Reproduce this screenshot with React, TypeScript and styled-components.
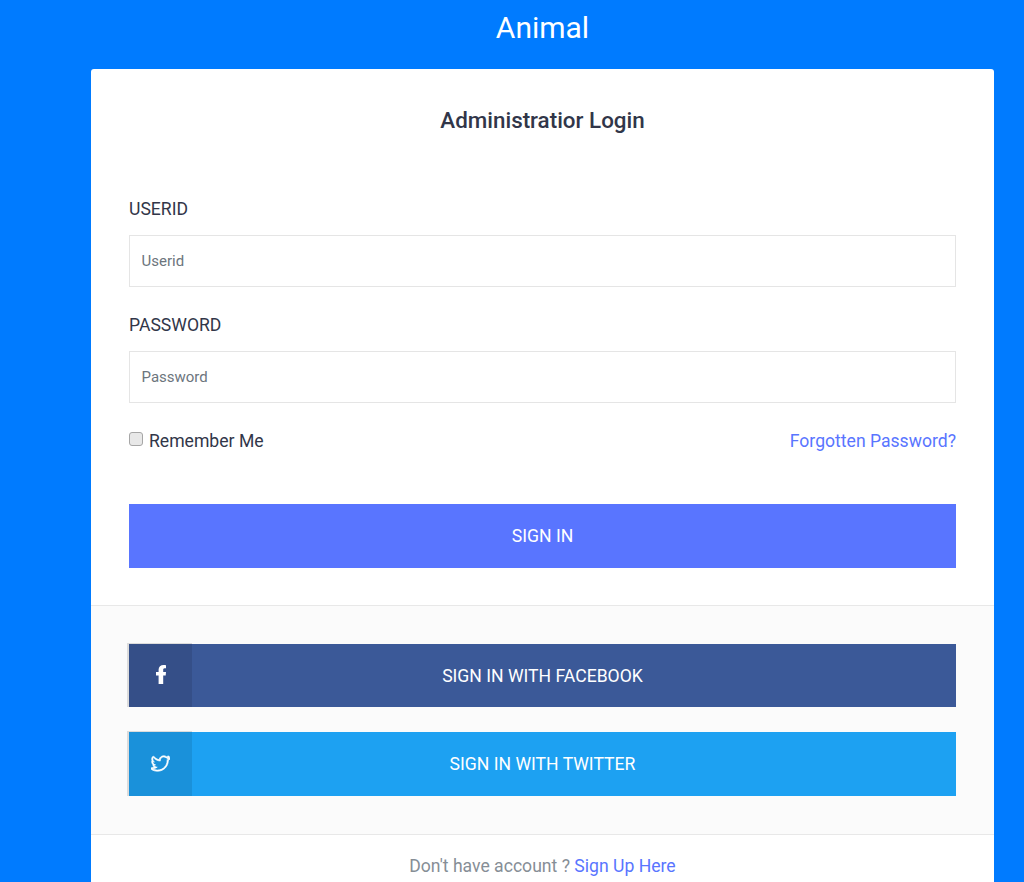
import React from "react";
import styled, { createGlobalStyle } from "styled-components";
import { SlSocialTwitter } from "react-icons/sl";

const Global = createGlobalStyle`
  html, body { margin: 0; padding: 0; height: 100%; overflow: hidden; background: #007bff; }
  * { box-sizing: border-box; }
  body { font-family: Roboto, "Liberation Sans", sans-serif; }
`;

const Page = styled.div`
  height: 882px;
  overflow: hidden;
  background: #007bff;
`;
const Brand = styled.h1`
  margin: 0;
  height: 69px;
  padding-top: 10px;
  padding-left: 61px;
  text-align: center;
  color: #fff;
  font-size: 30px;
  line-height: 36px;
  font-weight: 400;
`;
const Card = styled.div`
  margin: 0 30px 0 91px;
  background: #fff;
  border-radius: 3px;
`;
const Section = styled.div`
  padding: 38px 38px 37px;
`;
const Title = styled.h2`
  margin: 0 0 64px;
  text-align: center;
  color: #313649;
  font-size: 22.4px;
  line-height: 26px;
  font-weight: 500;
`;
const Field = styled.div`
  margin-bottom: 26px;
`;
const Label = styled.label`
  display: block;
  margin-bottom: 14px;
  color: #313649;
  font-size: 17.6px;
  line-height: 24px;
`;
const Input = styled.input`
  display: block;
  width: 100%;
  height: 52px;
  padding: 0 11.5px;
  border: 1px solid #e5e5e5;
  border-radius: 0;
  background: #fff;
  font-family: inherit;
  font-size: 15px;
  outline: none;
  &::placeholder { color: #6c757d; opacity: 1; }
`;
const OptionsRow = styled.div`
  display: flex;
  justify-content: space-between;
  align-items: center;
  height: 24px;
  margin-top: 1px;
  margin-bottom: 51px;
`;
const Remember = styled.label`
  display: flex;
  align-items: center;
  color: #313649;
  font-size: 17.6px;
  line-height: 24px;
`;
const Check = styled.input`
  appearance: none;
  width: 14px;
  height: 14px;
  margin: 0 6px 5px 0;
  border: 1px solid #a6a6a6;
  border-radius: 3px;
  background: #e8e8e8;
`;
const Link = styled.a`
  color: #5975ff;
  font-size: 17.6px;
  line-height: 24px;
  text-decoration: none;
`;
const SignIn = styled.button`
  display: block;
  width: 100%;
  height: 64px;
  border: 0;
  background: #5975ff;
  color: #fff;
  font-family: inherit;
  font-size: 17.6px;
  text-transform: uppercase;
`;
const SocialSection = styled.div`
  padding: 38px 38px;
  background: #fbfbfb;
  border-top: 1px solid #e8e8e8;
  border-bottom: 1px solid #e8e8e8;
  display: flex;
  flex-direction: column;
  gap: 25px;
`;
const SocialButton = styled.a<{ $bg: string; $h: number }>`
  position: relative;
  display: flex;
  align-items: center;
  justify-content: center;
  height: ${(p) => p.$h}px;
  background: ${(p) => p.$bg};
  color: #fff;
  font-size: 17.6px;
  text-transform: uppercase;
`;
const SocialIcon = styled.span<{ $bg: string; $size: number }>`
  position: absolute;
  left: -2px;
  top: -1px;
  bottom: 0;
  width: 65px;
  padding-bottom: 2px;
  display: flex;
  align-items: center;
  justify-content: center;
  background: ${(p) => p.$bg};
  border-left: 2px solid #dcdcdc;
  border-top: 1px solid #dcdcdc;
  font-size: ${(p) => p.$size}px;
`;
const Footer = styled.div`
  padding: 19px 0 40px;
  text-align: center;
  color: #868e96;
  font-size: 17.6px;
  line-height: 24px;
`;

export default function App() {
  return (
    <Page>
      <Global />
      <Brand>Animal</Brand>
      <Card>
        <Section>
          <Title>Administratior Login</Title>
          <Field>
            <Label>USERID</Label>
            <Input placeholder="Userid" />
          </Field>
          <Field>
            <Label>PASSWORD</Label>
            <Input type="password" placeholder="Password" />
          </Field>
          <OptionsRow>
            <Remember>
              <Check type="checkbox" />
              <span>Remember Me</span>
            </Remember>
            <Link href="#">Forgotten Password?</Link>
          </OptionsRow>
          <SignIn>Sign In</SignIn>
        </Section>
        <SocialSection>
          <SocialButton $bg="#3b5998" $h={63}>
            <SocialIcon $bg="#354f88" $size={18}>
              <svg width="10" height="19" viewBox="0 0 10 19" fill="#fff">
                <path d="M7.2 19V10.5h2.5l.3-3.6H7.2V5c0-1 .3-1.7 1.4-1.7H10V.2C9.7.1 8.8 0 7.6 0 4.6 0 2.6 1.7 2.6 4.6v2.3H0v3.6h2.6V19z" />
              </svg>
            </SocialIcon>
            Sign in with Facebook
          </SocialButton>
          <SocialButton $bg="#1da1f2" $h={64}>
            <SocialIcon $bg="#1a91da" $size={19}>
              <SlSocialTwitter strokeWidth={36} stroke="#fff" />
            </SocialIcon>
            Sign in with Twitter
          </SocialButton>
        </SocialSection>
        <Footer>
          Don't have account ? <Link href="#">Sign Up Here</Link>
        </Footer>
      </Card>
    </Page>
  );
}
